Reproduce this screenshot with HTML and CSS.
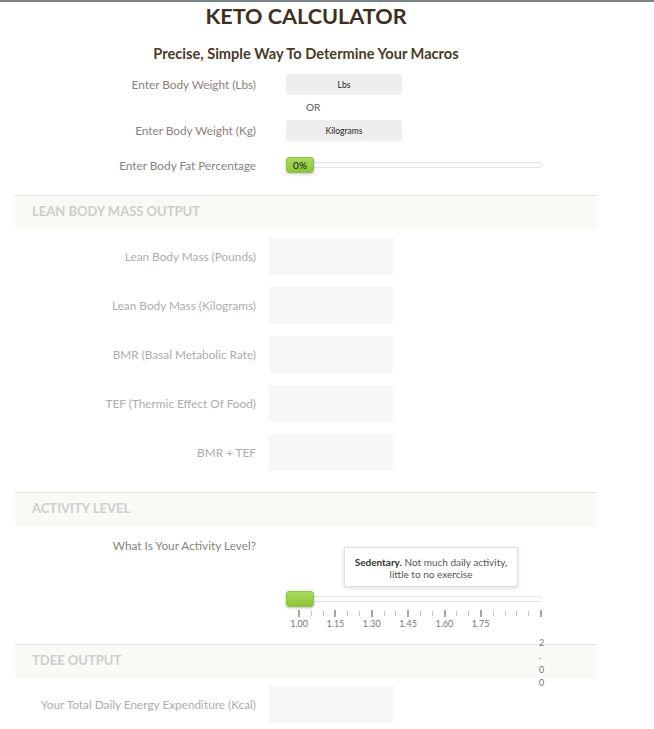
FILE: index.html
```html
<!DOCTYPE html>
<html>
<head>
<meta charset="utf-8">
<link rel="stylesheet" href="styles.css">
</head>
<body>
<div class="page">
  <h1 class="title">KETO CALCULATOR</h1>
  <h2 class="subtitle">Precise, Simple Way To Determine Your Macros</h2>

  <div class="row row-input first">
    <label class="label">Enter Body Weight (Lbs)</label>
    <div class="input">Lbs</div>
  </div>
  <div class="or">OR</div>
  <div class="row row-input">
    <label class="label">Enter Body Weight (Kg)</label>
    <div class="input">Kilograms</div>
  </div>
  <div class="row row-slider">
    <label class="label">Enter Body Fat Percentage</label>
    <div class="slider">
      <div class="track"></div>
      <div class="handle">0%</div>
    </div>
  </div>

  <div class="section-head first-head">LEAN BODY MASS OUTPUT</div>
  <div class="outputs">
    <div class="row row-out"><label class="label light">Lean Body Mass (Pounds)</label><div class="outbox"></div></div>
    <div class="row row-out"><label class="label light">Lean Body Mass (Kilograms)</label><div class="outbox"></div></div>
    <div class="row row-out"><label class="label light">BMR (Basal Metabolic Rate)</label><div class="outbox"></div></div>
    <div class="row row-out"><label class="label light">TEF (Thermic Effect Of Food)</label><div class="outbox"></div></div>
    <div class="row row-out"><label class="label light">BMR + TEF</label><div class="outbox"></div></div>
  </div>

  <div class="section-head act-head">ACTIVITY LEVEL</div>
  <div class="activity">
    <label class="label act-label">What Is Your Activity Level?</label>
    <div class="act-right">
      <div class="tooltip"><b>Sedentary.</b> Not much daily activity,<br>little to no exercise</div>
      <div class="slider">
        <div class="track"></div>
        <div class="handle blank"></div>
      </div>
      <div class="ticks">
        <span class="tick big"></span><span class="tick"></span><span class="tick"></span>
        <span class="tick big"></span><span class="tick"></span><span class="tick"></span>
        <span class="tick big"></span><span class="tick"></span><span class="tick"></span>
        <span class="tick big"></span><span class="tick"></span><span class="tick"></span>
        <span class="tick big"></span><span class="tick"></span><span class="tick"></span>
        <span class="tick big"></span><span class="tick"></span><span class="tick"></span>
        <span class="tick"></span><span class="tick"></span><span class="tick big"></span>
      </div>
      <div class="tick-labels">
        <span>1.00</span><span>1.15</span><span>1.30</span><span>1.45</span><span>1.60</span><span>1.75</span>
      </div>
      <div class="last-label">2.00</div>
    </div>
  </div>

  <div class="section-head tdee-head">TDEE OUTPUT</div>
  <div class="row row-out tdee-row"><label class="label light">Your Total Daily Energy Expenditure (Kcal)</label><div class="outbox"></div></div>
</div>
</body>
</html>
```
FILE: styles.css
```css
* { box-sizing: border-box; }
html, body { margin: 0; padding: 0; background: #fff; }
body {
  border-top: 2px solid #77838a;
  font-family: Lato, "Open Sans", sans-serif;
}
.page {
  width: 582px;
  margin-left: 15px;
}
.title {
  margin: 0;
  height: 28px;
  line-height: 28px;
  font-size: 21.6px;
  font-weight: 700;
  color: #3e2f1f;
  text-align: center;
}
.subtitle {
  margin: 14px 0 0;
  height: 20px;
  line-height: 20px;
  font-size: 14.6px;
  font-weight: 700;
  color: #4a3a28;
  text-align: center;
}
.row {
  display: flex;
  align-items: center;
}
.label {
  width: 241px;
  flex: none;
  text-align: right;
  font-size: 11.8px;
  color: #8d8179;
}
.label.light { color: #adadad; }
.row-input { height: 21px; }
.row-input.first { margin-top: 10px; }
.row-input .input {
  margin-left: 30px;
  width: 116px;
  height: 21px;
  background: #eeeeee;
  border-radius: 3px;
  font-size: 8.5px;
  color: #222;
  display: flex;
  align-items: center;
  justify-content: center;
}
.or {
  height: 25px;
  line-height: 25px;
  font-size: 10px;
  color: #555;
  padding-left: 291px;
}
.row-slider {
  margin-top: 16px;
  height: 16px;
}
.row-slider .slider { margin-left: 30px; }
.slider {
  position: relative;
  width: 256px;
  height: 16px;
  display: flex;
  align-items: center;
}
.track {
  width: 100%;
  height: 6px;
  border: 1px solid #e2e2e2;
  border-radius: 4px;
  background: #fff;
}
.handle {
  position: absolute;
  left: 0;
  top: 0;
  width: 28px;
  height: 16px;
  border: 1px solid #8cc63e;
  border-radius: 3px;
  background: linear-gradient(#a9da5c, #8dc43b);
  box-shadow: 0 1px 3px rgba(0,0,0,0.25);
  font-size: 10px;
  color: #111;
  display: flex;
  align-items: center;
  justify-content: center;
}
.section-head {
  border-top: 1px solid #e2e2e2;
  background: #fafaf4;
  height: 34px;
  padding-left: 17px;
  padding-bottom: 3px;
  display: flex;
  align-items: center;
  font-size: 13px;
  font-weight: 700;
  color: #cdcdcd;
}
.first-head { margin-top: 22px; }
.outputs {
  margin-top: 9px;
  display: flex;
  flex-direction: column;
  gap: 12px;
}
.row-out .outbox {
  margin-left: 13px;
  width: 124px;
  height: 37px;
  background: #f7f7f7;
}
.act-head { margin-top: 21px; }
.activity {
  display: flex;
  height: 118px;
}
.act-label {
  padding-top: 13px;
  line-height: 14px;
  height: 27px;
}
.act-right {
  position: relative;
  margin-left: 30px;
  width: 256px;
  padding-top: 65px;
}
.tooltip {
  position: absolute;
  left: 58px;
  top: 21px;
  width: 174px;
  height: 40px;
  padding-top: 8px;
  background: #fff;
  border: 1px solid #dedede;
  box-shadow: 0 1px 4px rgba(0,0,0,0.15);
  font-size: 10px;
  line-height: 12px;
  color: #555;
  text-align: center;
}
.tooltip b { color: #333; }
.ticks {
  margin-top: 2px;
  margin-left: 12px;
  width: 244px;
  height: 8px;
  display: flex;
  justify-content: space-between;
  align-items: center;
}
.tick {
  width: 1px;
  height: 5px;
  background: #c4c4c4;
}
.tick.big {
  width: 2px;
  height: 7px;
  background: #a5a5a5;
}
.tick-labels {
  margin-left: -5px;
  display: flex;
  height: 13px;
  align-items: center;
}
.tick-labels span {
  width: 36.3px;
  text-align: center;
  font-size: 9px;
  color: #777;
}
.last-label {
  position: absolute;
  left: 253px;
  top: 110px;
  width: 1px;
  word-break: break-all;
  line-break: anywhere;
  font-size: 9px;
  line-height: 13.3px;
  color: #777;
  z-index: 2;
}
.tdee-head { margin-top: 0; }
.tdee-row { margin-top: 8px; }
```
